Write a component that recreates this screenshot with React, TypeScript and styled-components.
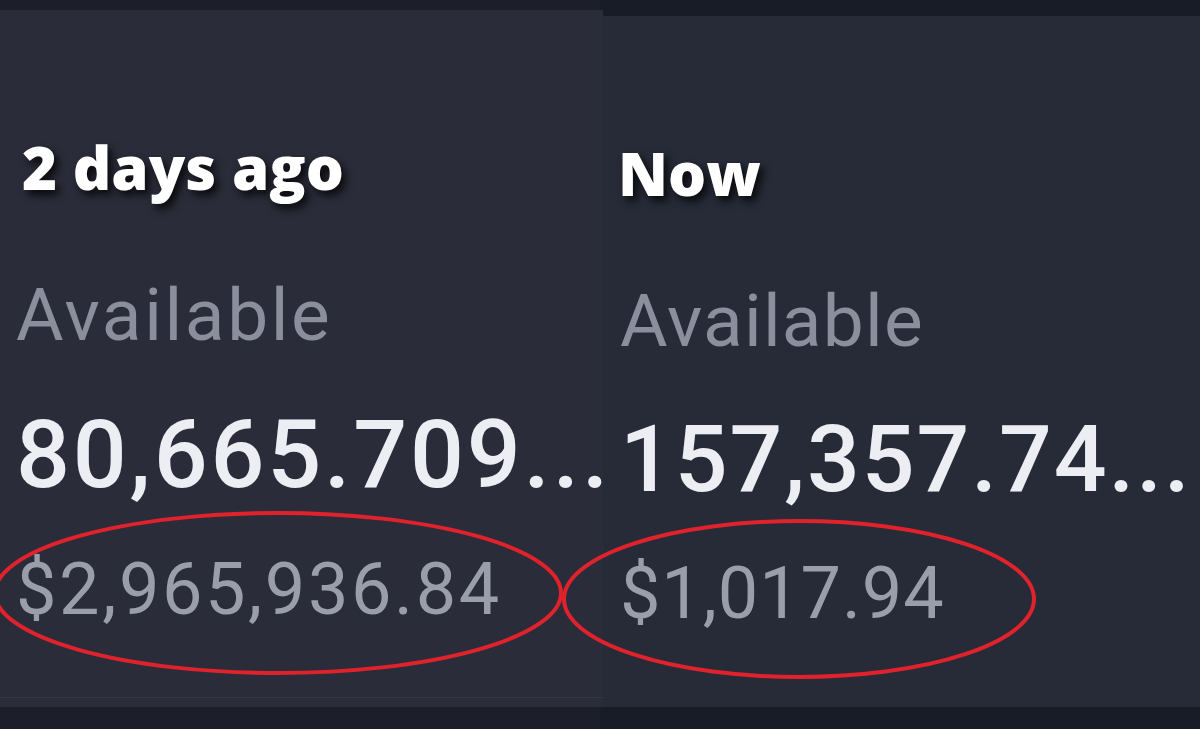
import { createGlobalStyle, styled } from 'styled-components';

const GlobalStyle = createGlobalStyle`
  html, body {
    margin: 0;
    padding: 0;
    background: #1b1e29;
  }
  body {
    font-family: Roboto, 'Liberation Sans', sans-serif;
  }
`;

const Board = styled.div`
  position: relative;
  width: 1200px;
  height: 729px;
  display: flex;
  align-items: stretch;
  padding-bottom: 22px;
  box-sizing: border-box;
  overflow: hidden;
  background: linear-gradient(to right, #1c1e2a 50%, #181c27 50%);
`;

const Panel = styled.section<{ $top: number; $width: number; $bg: string }>`
  margin-top: ${(p) => p.$top}px;
  width: ${(p) => p.$width}px;
  background: ${(p) => p.$bg};
  display: flex;
  flex-direction: column;
  padding: 127px 0 0 ${(p) => (p.$top < 12 ? 16 : 17)}px;
  box-sizing: border-box;
  position: relative;
`;

const Heading = styled.h2<{ $indent: number }>`
  margin: 0 0 82px ${(p) => p.$indent}px;
  font-family: 'Open Sans', sans-serif;
  font-weight: 800;
  font-size: 60px;
  line-height: 1;
  color: #ffffff;
  text-shadow: 4px 5px 8px rgba(0, 0, 0, 0.8);
`;

const Label = styled.div<{ $tracking: number }>`
  font-size: 73px;
  letter-spacing: ${(p) => p.$tracking}px;
  line-height: 1;
  color: #8b8e9c;
  margin-bottom: 55px;
`;

const Amount = styled.div<{ $size: number; $tracking: number }>`
  font-size: ${(p) => p.$size}px;
  font-weight: 500;
  letter-spacing: ${(p) => p.$tracking}px;
  line-height: 1;
  color: #eceef4;
  white-space: nowrap;
  margin-bottom: 52px;
`;

const Fiat = styled.div<{ $tracking: number }>`
  font-size: 72px;
  letter-spacing: ${(p) => p.$tracking}px;
  line-height: 1;
  color: #9a9eab;
  white-space: nowrap;
`;

const Footer = styled.div`
  margin-top: auto;
  height: 9px;
  border-top: 1px solid #343746;
  margin-left: -16px;
`;

const Marks = styled.svg`
  position: absolute;
  left: 0;
  top: 0;
  pointer-events: none;
`;

type Snapshot = {
  when: string;
  amount: string;
  fiat: string;
  top: number;
  width: number;
  bg: string;
  indent: number;
  size: number;
  tracking: number;
  labelTracking: number;
  fiatTracking: number;
};

const snapshots: Snapshot[] = [
  {
    when: '2 days ago',
    amount: '80,665.709...',
    fiat: '$2,965,936.84',
    top: 10,
    width: 603,
    bg: '#2a2c39',
    indent: 6,
    size: 95,
    tracking: 2.8,
    labelTracking: 2.6,
    fiatTracking: 2.6,
  },
  {
    when: 'Now',
    amount: '157,357.74...',
    fiat: '$1,017.94',
    top: 16,
    width: 597,
    bg: '#262b37',
    indent: -2,
    size: 93,
    tracking: 1.9,
    labelTracking: 1.2,
    fiatTracking: 0.9,
  },
];

function App() {
  return (
    <>
      <GlobalStyle />
      <Board>
        {snapshots.map((s) => (
          <Panel key={s.when} $top={s.top} $width={s.width} $bg={s.bg}>
            <Heading $indent={s.indent}>{s.when}</Heading>
            <Label $tracking={s.labelTracking}>Available</Label>
            <Amount $size={s.size} $tracking={s.tracking}>
              {s.amount}
            </Amount>
            <Fiat $tracking={s.fiatTracking}>{s.fiat}</Fiat>
            {s.top < 12 && <Footer />}
          </Panel>
        ))}
        <Marks width="1200" height="729" viewBox="0 0 1200 729">
          <ellipse cx="278" cy="593" rx="283" ry="80" fill="none" stroke="#e0222c" strokeWidth="4" />
          <ellipse cx="799" cy="599" rx="235" ry="78" fill="none" stroke="#e0222c" strokeWidth="4" />
        </Marks>
      </Board>
    </>
  );
}

export default App;
